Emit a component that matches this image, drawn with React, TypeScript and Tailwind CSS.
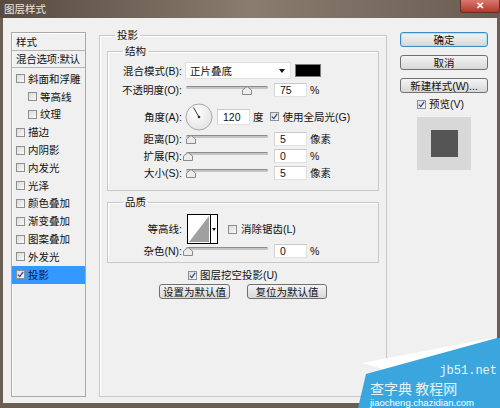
import React from 'react';

const Check = ({ checked = false }: { checked?: boolean }) => (
  <span className="flex h-[9px] w-[9px] shrink-0 items-center justify-center border border-[#8e8f8f] bg-gradient-to-br from-[#dadada] to-[#fafafa]">
    {checked && (
      <svg width="7" height="7" viewBox="0 0 7 7">
        <path d="M0.8 3.6 L2.8 5.6 L6.2 0.8" stroke="#2b4c8f" strokeWidth="1.3" fill="none" />
      </svg>
    )}
  </span>
);

const Slider = ({ pos }: { pos: number }) => (
  <div className="relative h-[14px] w-[82px] shrink-0">
    <div className="absolute left-0 right-0 top-[3px] h-[3px] rounded-full border-t border-[#8c8c8c] bg-[#c4c4c4]" />
    <svg className="absolute top-[3px]" style={{ left: pos - 5 }} width="10" height="9" viewBox="0 0 10 9">
      <path d="M0.5 8.5 V4 L5 0.5 L9.5 4 V8.5 Z" fill="#ececec" stroke="#8a8a8a" />
    </svg>
  </div>
);

const Field = ({ value, w = 'w-[33px]', h = 'h-[14px]' }: { value: string; w?: string; h?: string }) => (
  <div className={`flex shrink-0 items-center border border-[#e2e2e2] border-t-[#c9c9c9] border-l-[#d4d4d4] bg-white pl-[5px] ${w} ${h}`}>
    {value}
  </div>
);

const Label = ({ text }: { text: string }) => (
  <div className="w-[74px] shrink-0 text-right">{text}</div>
);

const SliderRow = ({ label, pos, value, unit, className = '' }: { label: string; pos: number; value: string; unit: string; className?: string }) => (
  <div className={`flex h-[14px] items-center ${className}`}>
    <Label text={label} />
    <div className="ml-[4px]">
      <Slider pos={pos} />
    </div>
    <div className="ml-[6px]">
      <Field value={value} />
    </div>
    <span className="ml-[3px]">{unit}</span>
  </div>
);

const Btn = ({ children, className = '' }: { children: React.ReactNode; className?: string }) => (
  <div className={`flex h-[15px] items-center justify-center rounded-[3px] border bg-gradient-to-b from-[#f4f4f4] to-[#d8d8d8] ${className}`}>
    {children}
  </div>
);

const styleItems: { name: string; indent?: boolean }[] = [
  { name: '斜面和浮雕' },
  { name: '等高线', indent: true },
  { name: '纹理', indent: true },
  { name: '描边' },
  { name: '内阴影' },
  { name: '内发光' },
  { name: '光泽' },
  { name: '颜色叠加' },
  { name: '渐变叠加' },
  { name: '图案叠加' },
  { name: '外发光' },
];

export default function App() {
  return (
    <div className="relative flex h-[408px] w-[500px] flex-col overflow-hidden bg-[#6b5e52] text-[10.5px] leading-[12px] text-[#111] [font-family:'Liberation_Sans','Noto_Sans_CJK_SC',sans-serif]">
      {/* title bar */}
      <div className="flex h-[18px] shrink-0 items-start justify-between bg-gradient-to-r from-[#584a3e] via-[#8a7d70] to-[#6a5c50]">
        <span className="ml-[4px] mt-[3px] text-[#ebe6e0]">图层样式</span>
        <div className="flex h-[13px] w-[40px] items-center justify-center rounded-b-[3px] border border-t-0 border-[#6b2a22] bg-gradient-to-b from-[#d9776a] to-[#b03a2c] text-[10px] font-bold text-white">
          ✕
        </div>
      </div>

      {/* body */}
      <div className="mx-[3px] mb-[5px] flex flex-1 bg-[#f0f0f0] pl-[8px] pt-[11px]">
        {/* styles list */}
        <div className="mt-[3px] flex h-[365px] w-[75px] shrink-0 flex-col border border-[#a9a9a9] shadow-[inset_1px_1px_0_#fff]">
          <div className="flex h-[18px] items-center border-b border-[#b5b5b5] pl-[4px]">样式</div>
          <div className="flex h-[17px] items-center border-b border-[#b5b5b5] pl-[4px] tracking-[-0.3px]">混合选项:默认</div>
          <div className="flex flex-col pt-[2px]">
            {styleItems.map((it) => (
              <div key={it.name} className={`flex h-[17.8px] items-center gap-[3px] ${it.indent ? 'pl-[16px]' : 'pl-[4px]'}`}>
                <Check />
                <span>{it.name}</span>
              </div>
            ))}
            <div className="flex h-[17.8px] items-center gap-[3px] bg-[#3399ff] pl-[4px] text-[#0b1a40]">
              <Check checked />
              <span>投影</span>
            </div>
          </div>
        </div>

        {/* drop shadow group */}
        <fieldset className="ml-[13px] h-[368px] w-[288px] shrink-0 border border-[#c8c8c8] shadow-[inset_1px_1px_0_#fff]">
          <legend className="ml-[15px] px-[2px] leading-[12px]">投影</legend>

          <fieldset className="ml-[7px] mt-[4px] w-[272px] border border-[#c8c8c8] pb-[10px] shadow-[inset_1px_1px_0_#fff]">
            <legend className="ml-[15px] px-[2px] leading-[12px]">结构</legend>

            <div className="mt-[5px] flex h-[17px] items-center">
              <Label text="混合模式(B):" />
              <div className="ml-[3px] flex h-[17px] w-[106px] items-center justify-between border border-[#e0e0e0] bg-white pl-[4px] pr-[5px]">
                <span>正片叠底</span>
                <svg width="6" height="4" viewBox="0 0 6 4">
                  <path d="M0 0 H6 L3 4 Z" fill="#111" />
                </svg>
              </div>
              <div className="ml-[4px] h-[13px] w-[26px] border border-[#7a7a7a] bg-black" />
            </div>

            <SliderRow label="不透明度(O):" pos={61} value="75" unit="%" className="mt-[4px]" />

            <div className="mt-[6px] flex h-[27px] items-center">
              <Label text="角度(A):" />
              <svg className="ml-[3px] shrink-0" width="28" height="28" viewBox="0 0 28 28">
                <defs>
                  <radialGradient id="dial" cx="0.4" cy="0.35" r="0.7">
                    <stop offset="0" stopColor="#ffffff" />
                    <stop offset="1" stopColor="#e2e2e2" />
                  </radialGradient>
                </defs>
                <circle cx="14" cy="14" r="13" fill="url(#dial)" stroke="#a9a9a9" />
                <line x1="14" y1="14" x2="8.5" y2="4.5" stroke="#333" strokeWidth="1" />
                <circle cx="14" cy="14" r="1.3" fill="#333" />
              </svg>
              <div className="ml-[4px]">
                <Field value="120" h="h-[16px]" />
              </div>
              <span className="ml-[3px]">度</span>
              <div className="ml-[6px]">
                <Check checked />
              </div>
              <span className="ml-[4px]">使用全局光(G)</span>
            </div>

            <SliderRow label="距离(D):" pos={5} value="5" unit="像素" className="mt-[2px]" />
            <SliderRow label="扩展(R):" pos={2} value="0" unit="%" className="mt-[3px]" />
            <SliderRow label="大小(S):" pos={5} value="5" unit="像素" className="mt-[3px]" />
          </fieldset>

          <fieldset className="ml-[7px] mt-[5px] w-[272px] border border-[#c8c8c8] pb-[4px] shadow-[inset_1px_1px_0_#fff]">
            <legend className="ml-[15px] px-[2px] leading-[12px]">品质</legend>

            <div className="mt-[6px] flex h-[30px] items-center">
              <Label text="等高线:" />
              <div className="ml-[5px] flex h-[30px] w-[31px] border border-black bg-white">
                <svg width="22" height="28" viewBox="0 0 22 28" className="shrink-0">
                  <path d="M1 27 L21 1 V27 Z" fill="#a0a0a0" />
                </svg>
                <div className="flex flex-1 items-center justify-center border-l border-black">
                  <svg width="4" height="3" viewBox="0 0 4 3">
                    <path d="M0 0 H4 L2 3 Z" fill="#111" />
                  </svg>
                </div>
              </div>
              <div className="ml-[10px]">
                <Check />
              </div>
              <span className="ml-[4px]">消除锯齿(L)</span>
            </div>

            <SliderRow label="杂色(N):" pos={2} value="0" unit="%" />
          </fieldset>

          <div className="mt-[6px] flex h-[12px] items-center pl-[88px]">
            <Check checked />
            <span className="ml-[3px]">图层挖空投影(U)</span>
          </div>

          <div className="mt-[3px] flex gap-[17px] pl-[59px]">
            <Btn className="w-[71px] border-[#707070]">设置为默认值</Btn>
            <Btn className="w-[80px] border-[#707070]">复位为默认值</Btn>
          </div>
        </fieldset>

        {/* right column */}
        <div className="ml-[13px] mt-[3px] flex w-[88px] shrink-0 flex-col">
          <Btn className="border-[#3d8ac4] shadow-[inset_0_0_0_1px_#a8e2f7]">确定</Btn>
          <Btn className="mt-[8px] border-[#707070]">取消</Btn>
          <Btn className="mt-[8px] border-[#707070]">新建样式(W)...</Btn>
          <div className="mt-[5px] flex h-[12px] items-center pl-[17px]">
            <Check checked />
            <span className="ml-[3px]">预览(V)</span>
          </div>
          <div className="ml-[17px] mt-[7px] flex h-[53px] w-[54px] items-center justify-center bg-[#d8d8d8]">
            <div className="h-[27px] w-[27px] bg-[#555555]" />
          </div>
        </div>
      </div>

      {/* watermark */}
      <div className="absolute bottom-0 right-0 h-[72px] w-[142px]">
        <svg className="absolute inset-0" width="142" height="72" viewBox="0 0 142 72">
          <path d="M4 27 L139 1 L50 40 Z" fill="#ffffff" />
          <path d="M0 72 L8 38 L139 2 L142 2 L142 72 Z" fill="#3aa6dd" />
        </svg>
        <div className="absolute right-[3px] top-[29px] text-[12px] leading-[12px] text-[#e8f4fb] [font-family:'Liberation_Mono',monospace]">jb51.net</div>
        <div className="absolute left-[12px] top-[45px] text-[14px] leading-[14px] text-white/85 [font-family:'Noto_Sans_CJK_SC',sans-serif]">查字典 教程网</div>
        <div className="absolute left-[12px] top-[62px] text-[9.5px] leading-[10px] text-white [font-family:'Liberation_Sans',sans-serif]">jiaocheng.chazidian.com</div>
      </div>
    </div>
  );
}
